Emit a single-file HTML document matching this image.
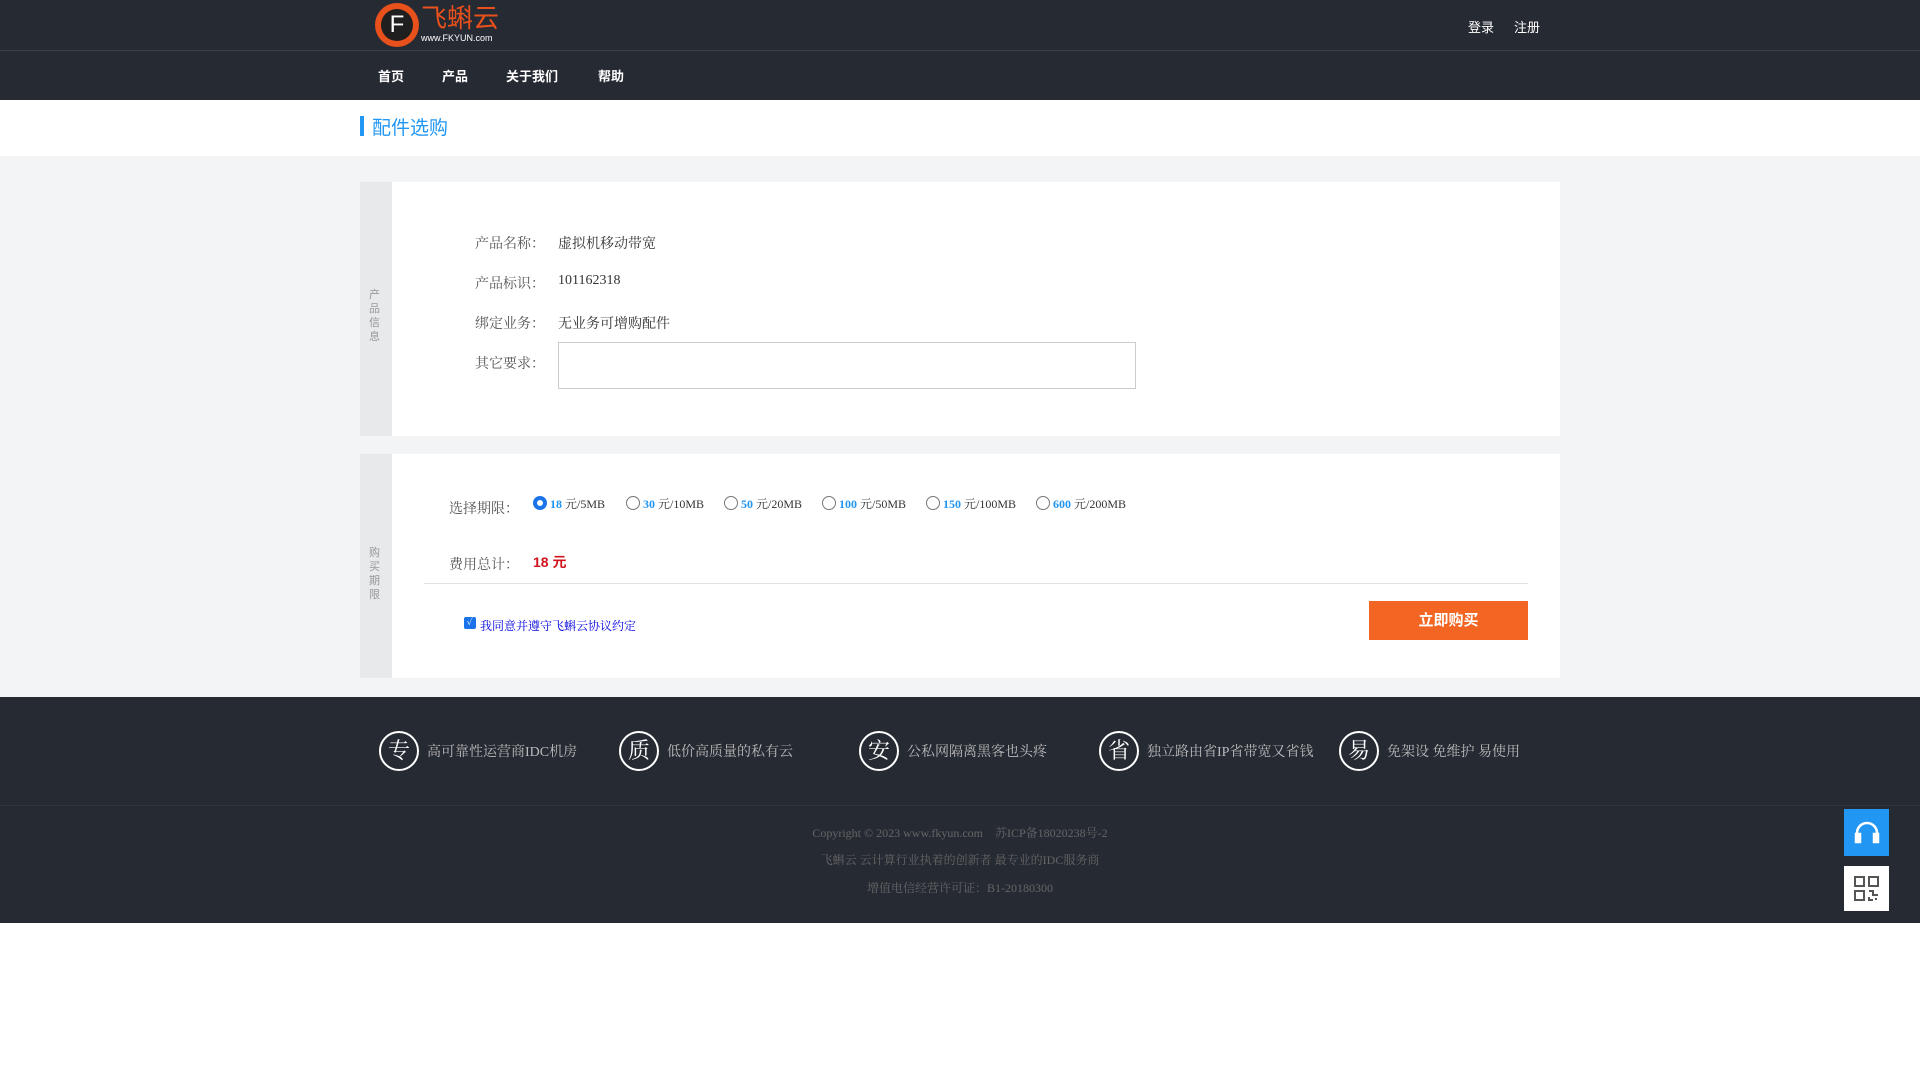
<!DOCTYPE html>
<html><head><meta charset="utf-8"><style>
*{margin:0;padding:0;box-sizing:border-box}
body{width:1920px;height:1080px;background:#fff;font-family:"Liberation Serif","Noto Serif CJK SC",serif;position:relative;overflow:hidden;font-size:14px;color:#333}
.a{position:absolute}
.sans{font-family:"Liberation Sans","Noto Sans CJK SC",sans-serif}
</style></head><body>
<div class="a" style="left:0;top:0;width:1920px;height:100px;background:#262a33"></div>
<div class="a" style="left:0;top:50px;width:1920px;height:1px;background:#3c4049"></div>
<div class="a" style="left:375px;top:3px;width:44px;height:44px;border-radius:50%;background:#e8501c"></div>
<div class="a" style="left:381px;top:9px;width:32px;height:32px;border-radius:50%;background:#1f1f1f"></div>
<div class="a sans" style="left:381px;top:9px;width:32px;line-height:32px;text-align:center;color:#fff;font-size:24px">F</div>
<div class="a sans" style="left:421px;top:2px;color:#e8501c;font-size:26px;line-height:32px">飞蝌云</div>
<div class="a sans" style="left:421px;top:33px;color:#fff;font-size:9px">www.FKYUN.com</div>
<div class="a sans" style="left:1468px;top:17px;color:#fff;font-size:13px">登录</div>
<div class="a sans" style="left:1514px;top:17px;color:#fff;font-size:13px">注册</div>
<div class="a sans" style="left:378px;top:66px;color:#fff;font-size:13px;font-weight:bold;word-spacing:0">首页</div>
<div class="a sans" style="left:442px;top:66px;color:#fff;font-size:13px;font-weight:bold">产品</div>
<div class="a sans" style="left:506px;top:66px;color:#fff;font-size:13px;font-weight:bold">关于我们</div>
<div class="a sans" style="left:598px;top:66px;color:#fff;font-size:13px;font-weight:bold">帮助</div>
<div class="a" style="left:360px;top:116px;width:4px;height:20px;background:#2196f3"></div>
<div class="a sans" style="left:372px;top:113px;color:#2196f3;font-size:19px">配件选购</div>
<div class="a" style="left:0;top:156px;width:1920px;height:541px;background:#f3f4f6"></div>
<!-- panel1 -->
<div class="a" style="left:360px;top:182px;width:1200px;height:254px;background:#fff"></div>
<div class="a" style="left:360px;top:182px;width:32px;height:254px;background:#e8e9eb"></div>
<div class="a sans" style="left:369px;top:288px;width:14px;font-size:11px;color:#999;line-height:14px">产品信息</div>
<div class="a" style="left:475px;top:233px;color:#555">产品名称：</div><div class="a" style="left:558px;top:233px">虚拟机移动带宽</div>
<div class="a" style="left:475px;top:273px;color:#555">产品标识：</div><div class="a" style="left:558px;top:273px">101162318</div>
<div class="a" style="left:475px;top:313px;color:#555">绑定业务：</div><div class="a" style="left:558px;top:313px">无业务可增购配件</div>
<div class="a" style="left:475px;top:353px;color:#555">其它要求：</div>
<div class="a" style="left:558px;top:342px;width:578px;height:47px;border:1px solid #ccc"></div>
<!-- panel2 -->
<div class="a" style="left:360px;top:454px;width:1200px;height:224px;background:#fff"></div>
<div class="a" style="left:360px;top:454px;width:32px;height:224px;background:#e8e9eb"></div>
<div class="a sans" style="left:369px;top:546px;width:14px;font-size:11px;color:#999;line-height:14px">购买期限</div>
<div class="a" style="left:449px;top:498px;color:#555">选择期限：</div>
<div class="a" style="left:533px;top:495px;font-size:12px;white-space:nowrap">
<span style="display:inline-block;width:14px;height:14px;border-radius:50%;border:4px solid #1a73e8;vertical-align:-2px"></span> <b style="color:#2196f3">18</b> 元/5MB
</div>
<div class="a" style="left:626px;top:495px;font-size:12px;white-space:nowrap"><span style="display:inline-block;width:14px;height:14px;border-radius:50%;border:1px solid #777;vertical-align:-2px"></span> <b style="color:#2196f3">30</b> 元/10MB</div>
<div class="a" style="left:724px;top:495px;font-size:12px;white-space:nowrap"><span style="display:inline-block;width:14px;height:14px;border-radius:50%;border:1px solid #777;vertical-align:-2px"></span> <b style="color:#2196f3">50</b> 元/20MB</div>
<div class="a" style="left:822px;top:495px;font-size:12px;white-space:nowrap"><span style="display:inline-block;width:14px;height:14px;border-radius:50%;border:1px solid #777;vertical-align:-2px"></span> <b style="color:#2196f3">100</b> 元/50MB</div>
<div class="a" style="left:926px;top:495px;font-size:12px;white-space:nowrap"><span style="display:inline-block;width:14px;height:14px;border-radius:50%;border:1px solid #777;vertical-align:-2px"></span> <b style="color:#2196f3">150</b> 元/100MB</div>
<div class="a" style="left:1036px;top:495px;font-size:12px;white-space:nowrap"><span style="display:inline-block;width:14px;height:14px;border-radius:50%;border:1px solid #777;vertical-align:-2px"></span> <b style="color:#2196f3">600</b> 元/200MB</div>
<div class="a" style="left:449px;top:554px;color:#555">费用总计：</div>
<div class="a sans" style="left:533px;top:552px;color:#d0141c;font-weight:bold;font-size:14px">18 元</div>
<div class="a" style="left:424px;top:583px;width:1104px;height:1px;background:#e2e2e2"></div>
<div class="a" style="left:464px;top:617px;width:12px;height:12px;background:#1a73e8;border-radius:2px;color:#fff;font-size:10px;line-height:12px;text-align:center">✓</div>
<div class="a" style="left:480px;top:617px;color:#0000dd;font-size:12px">我同意并遵守飞蝌云协议约定</div>
<div class="a sans" style="left:1369px;top:601px;width:159px;height:39px;background:#f26522;color:#fff;font-size:15px;font-weight:bold;line-height:39px;text-align:center">立即购买</div>
<!-- footer -->
<div class="a" style="left:0;top:697px;width:1920px;height:226px;background:#262a33"></div>
<div class="a" style="left:0;top:805px;width:1920px;height:1px;background:#30343d"></div>
<div class="a" style="left:379px;top:731px;width:40px;height:40px;border:2px solid #fff;border-radius:50%;color:#fff;font-size:22px;line-height:36px;text-align:center">专</div>
<div class="a" style="left:427px;top:741px;color:#bbb">高可靠性运营商IDC机房</div>
<div class="a" style="left:619px;top:731px;width:40px;height:40px;border:2px solid #fff;border-radius:50%;color:#fff;font-size:22px;line-height:36px;text-align:center">质</div>
<div class="a" style="left:667px;top:741px;color:#bbb">低价高质量的私有云</div>
<div class="a" style="left:859px;top:731px;width:40px;height:40px;border:2px solid #fff;border-radius:50%;color:#fff;font-size:22px;line-height:36px;text-align:center">安</div>
<div class="a" style="left:907px;top:741px;color:#bbb">公私网隔离黑客也头疼</div>
<div class="a" style="left:1099px;top:731px;width:40px;height:40px;border:2px solid #fff;border-radius:50%;color:#fff;font-size:22px;line-height:36px;text-align:center">省</div>
<div class="a" style="left:1147px;top:741px;color:#bbb">独立路由省IP省带宽又省钱</div>
<div class="a" style="left:1339px;top:731px;width:40px;height:40px;border:2px solid #fff;border-radius:50%;color:#fff;font-size:22px;line-height:36px;text-align:center">易</div>
<div class="a" style="left:1387px;top:741px;color:#bbb">免架设 免维护 易使用</div>
<div class="a" style="left:0;top:824px;width:1920px;text-align:center;color:#666;font-size:12px">Copyright © 2023 www.fkyun.com &nbsp;&nbsp; 苏ICP备18020238号-2</div>
<div class="a" style="left:0;top:851px;width:1920px;text-align:center;color:#666;font-size:12px">飞蝌云 云计算行业执着的创新者 最专业的IDC服务商</div>
<div class="a" style="left:0;top:879px;width:1920px;text-align:center;color:#666;font-size:12px">增值电信经营许可证：B1-20180300</div>
<div class="a" style="left:1844px;top:809px;width:45px;height:47px;background:#2196f3"></div>
<svg class="a" style="left:1851px;top:817px" width="32" height="32" viewBox="0 0 32 32" fill="none" stroke="#fff" stroke-width="2.5"><path d="M6 20v-4a10 10 0 0 1 20 0v4"/><rect x="5" y="17" width="4" height="8" fill="#fff"/><rect x="23" y="17" width="4" height="8" fill="#fff"/></svg>
<div class="a" style="left:1844px;top:866px;width:45px;height:45px;background:#fff"></div>
<svg class="a" style="left:1853px;top:875px" width="27" height="27" viewBox="0 0 27 27" fill="none" stroke="#555" stroke-width="2"><rect x="2" y="2" width="9" height="9"/><rect x="16" y="2" width="9" height="9"/><rect x="2" y="16" width="9" height="9"/><path d="M16 16h4v4h5M16 22v3h4M23 23v2"/></svg>
</body></html>
